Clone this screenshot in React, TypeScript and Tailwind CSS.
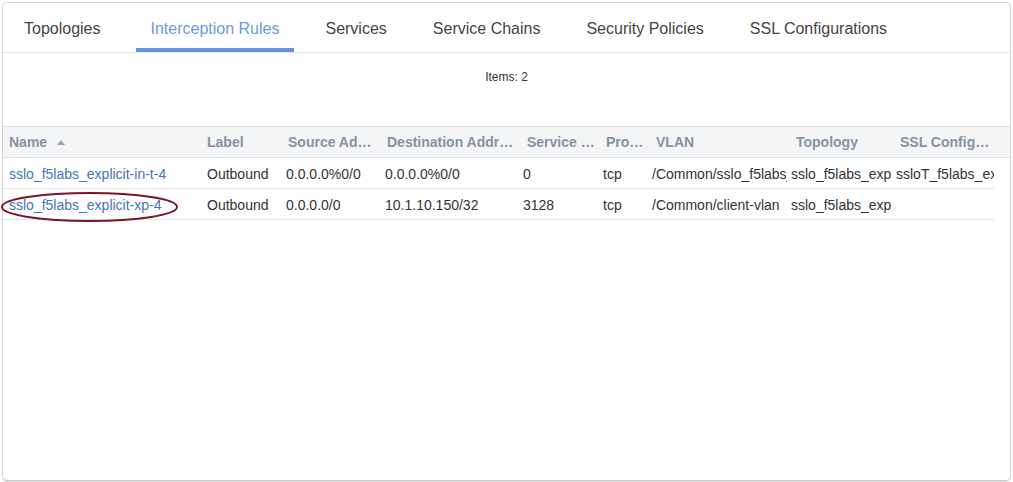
import React from "react";

const tabs = [
  "Topologies",
  "Interception Rules",
  "Services",
  "Service Chains",
  "Security Policies",
  "SSL Configurations",
];

type Col = { key: string; title: string; w: number; cp: number; hp: number };

const cols: Col[] = [
  { key: "name", title: "Name", w: 199, cp: 6, hp: 6 },
  { key: "label", title: "Label", w: 80, cp: 5, hp: 5 },
  { key: "src", title: "Source Address", w: 99, cp: 4, hp: 6 },
  { key: "dst", title: "Destination Address", w: 138, cp: 4, hp: 6 },
  { key: "svc", title: "Service Port", w: 80, cp: 4, hp: 8 },
  { key: "proto", title: "Protocol", w: 49, cp: 4, hp: 7 },
  { key: "vlan", title: "VLAN", w: 139, cp: 4, hp: 8 },
  { key: "topo", title: "Topology", w: 105, cp: 4, hp: 9 },
  { key: "ssl", title: "SSL Configuration", w: 102, cp: 4, hp: 8 },
];

const rows: Record<string, string>[] = [
  {
    name: "sslo_f5labs_explicit-in-t-4",
    label: "Outbound",
    src: "0.0.0.0%0/0",
    dst: "0.0.0.0%0/0",
    svc: "0",
    proto: "tcp",
    vlan: "/Common/sslo_f5labs_explicit.app/sslo_f5labs_explicit-loopback",
    topo: "sslo_f5labs_explicit",
    ssl: "ssloT_f5labs_explicit",
  },
  {
    name: "sslo_f5labs_explicit-xp-4",
    label: "Outbound",
    src: "0.0.0.0/0",
    dst: "10.1.10.150/32",
    svc: "3128",
    proto: "tcp",
    vlan: "/Common/client-vlan",
    topo: "sslo_f5labs_explicit",
    ssl: "",
  },
];

export default function App() {
  return (
    <div
      className="w-[1013px] h-[482px] bg-white pt-[2px] pl-[2px]"
      style={{ fontFamily: '"Liberation Sans", Arial, sans-serif' }}
    >
      <div className="w-[1009px] h-[479px] bg-white border border-[#d6d6d6] border-b-[#c4c4c4] rounded-[5px] shadow-[0_1px_1px_rgba(0,0,0,0.12)] flex flex-col">
        {/* Tabs */}
        <div className="h-[50px] border-b border-[#e3e6ea] flex pl-[6px] gap-[16px] shrink-0">
          {tabs.map((t, i) => {
            const active = i === 1;
            return (
              <div
                key={t}
                className={
                  "flex flex-col items-center px-[15px] pt-[17px] h-[49px] text-[16px] leading-[18px] " +
                  (i === 1 ? "ml-[4px] " : "") +
                  (active ? "text-[#6b9ae2]" : "text-[#444444]")
                }
              >
                <span className="whitespace-nowrap">{t}</span>
                <div
                  className={
                    "mt-auto h-[4px] self-stretch -mx-[15px] " +
                    (active ? "bg-[#6592dd]" : "bg-transparent")
                  }
                />
              </div>
            );
          })}
        </div>

        {/* Items count */}
        <div className="pt-[17px] text-center text-[12px] leading-[14px] text-[#333333]">
          Items: 2
        </div>

        {/* Table */}
        <div className="mt-[42px] flex flex-col">
          <div className="flex h-[32px] bg-[#f4f5f7] border-y border-[#dcdfe4]">
            {cols.map((c, i) => (
              <div
                key={c.key}
                className="flex items-center shrink-0 overflow-hidden pt-[1px] text-[14px] font-bold text-[#8891a2]"
                style={{ width: c.w, paddingLeft: c.hp, paddingRight: 4 }}
              >
                <span className="truncate whitespace-nowrap">{c.title}</span>
                {i === 0 && (
                  <svg width="8" height="5" viewBox="0 0 8 5" className="ml-[10px] shrink-0">
                    <path d="M0 5 L4 0 L8 5 Z" fill="#9aa2b0" />
                  </svg>
                )}
              </div>
            ))}
          </div>
          {rows.map((r, ri) => (
            <div
              key={ri}
              className="relative flex h-[31px] w-[991px] border-b border-[#e2e4e8]"
            >
              {cols.map((c) => (
                <div
                  key={c.key}
                  className={
                    "flex items-center shrink-0 overflow-hidden whitespace-nowrap pt-[2px] text-[14px] " +
                    (c.key === "name" ? "text-[#4574ba]" : "text-[#333333]")
                  }
                  style={{ width: c.w, paddingLeft: c.cp }}
                >
                  {r[c.key]}
                </div>
              ))}
              {ri === 1 && (
                <svg
                  className="absolute left-[-3px] top-[1px] pointer-events-none"
                  width="180"
                  height="34"
                  viewBox="0 0 180 34"
                >
                  <ellipse
                    cx="89.5"
                    cy="17"
                    rx="87.5"
                    ry="14"
                    fill="none"
                    stroke="#7a1426"
                    strokeWidth="2"
                  />
                </svg>
              )}
            </div>
          ))}
        </div>
      </div>
    </div>
  );
}
